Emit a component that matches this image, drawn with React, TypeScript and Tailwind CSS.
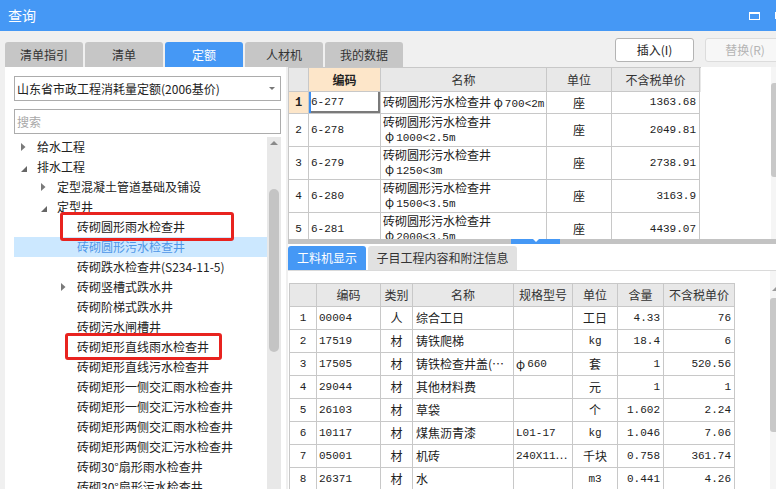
import React from 'react'

type TreeNode = { t: string; lv: number; arrow?: 'open' | 'closed'; sel?: boolean }

const tree: TreeNode[] = [
  { t: '给水工程', lv: 0, arrow: 'closed' },
  { t: '排水工程', lv: 0, arrow: 'open' },
  { t: '定型混凝土管道基础及铺设', lv: 1, arrow: 'closed' },
  { t: '定型井', lv: 1, arrow: 'open' },
  { t: '砖砌圆形雨水检查井', lv: 2 },
  { t: '砖砌圆形污水检查井', lv: 2, sel: true },
  { t: '砖砌跌水检查井(S234-11-5)', lv: 2 },
  { t: '砖砌竖槽式跌水井', lv: 2, arrow: 'closed' },
  { t: '砖砌阶梯式跌水井', lv: 2 },
  { t: '砖砌污水闸槽井', lv: 2 },
  { t: '砖砌矩形直线雨水检查井', lv: 2 },
  { t: '砖砌矩形直线污水检查井', lv: 2 },
  { t: '砖砌矩形一侧交汇雨水检查井', lv: 2 },
  { t: '砖砌矩形一侧交汇污水检查井', lv: 2 },
  { t: '砖砌矩形两侧交汇雨水检查井', lv: 2 },
  { t: '砖砌矩形两侧交汇污水检查井', lv: 2 },
  { t: '砖砌30°扇形雨水检查井', lv: 2 },
  { t: '砖砌30°扇形污水检查井', lv: 2 },
]

const pad = ['pl-[4px]', 'pl-[24px]', 'pl-[44px]']

const upper = [
  { n: '1', code: '6-277', l1: '砖砌圆形污水检查井 ', l2: '700<2m', price: '1363.68', h: 'h-[22px]' },
  { n: '2', code: '6-278', l1: '砖砌圆形污水检查井', l2: '1000<2.5m', price: '2049.81', h: 'h-[33px]' },
  { n: '3', code: '6-279', l1: '砖砌圆形污水检查井', l2: '1250<3m', price: '2738.91', h: 'h-[33px]' },
  { n: '4', code: '6-280', l1: '砖砌圆形污水检查井', l2: '1500<3.5m', price: '3163.9', h: 'h-[33px]' },
  { n: '5', code: '6-281', l1: '砖砌圆形污水检查井', l2: '2000<3.5m', price: '4439.07', h: 'h-[33px]' },
]

const lower = [
  ['1', '00004', '人', '综合工日', '', '工日', '4.33', '76'],
  ['2', '17519', '材', '铸铁爬梯', '', 'kg', '18.4', '6'],
  ['3', '17505', '材', '铸铁检查井盖(⋯', 'φ660', '套', '1', '520.56'],
  ['4', '29044', '材', '其他材料费', '', '元', '1', '1'],
  ['5', '26103', '材', '草袋', '', '个', '1.602', '2.24'],
  ['6', '10117', '材', '煤焦沥青漆', 'L01-17', 'kg', '1.046', '7.06'],
  ['7', '05001', '材', '机砖', '240X11⋯', '千块', '0.758', '361.74'],
  ['8', '26371', '材', '水', '', 'm3', '0.441', '4.26'],
]

const mono = "font-['Liberation_Mono','Noto_Sans_CJK_SC',monospace] text-[11px]"
const cell = 'border-r border-b border-[#c8c8c8] flex items-center shrink-0 overflow-hidden whitespace-nowrap'

function Phi() {
  return <span className="font-['Noto_Sans_CJK_SC',sans-serif] text-[12px] pr-[2px]">φ</span>
}

function Arrow({ kind }: { kind?: 'open' | 'closed' }) {
  if (kind === 'closed')
    return (
      <svg width="5" height="8" viewBox="0 0 5 8">
        <path d="M0 0 L4.5 4 L0 8 Z" fill="#7a7a7a" />
      </svg>
    )
  if (kind === 'open')
    return (
      <svg width="6" height="6" viewBox="0 0 6 6" className="mt-[4px]">
        <path d="M6 0 L6 6 L0 6 Z" fill="#666" />
      </svg>
    )
  return null
}

export default function App() {
  const lowerW = ['w-[27px]', 'w-[64px]', 'w-[32px]', 'w-[101px]', 'w-[59px]', 'w-[45px]', 'w-[46px]', 'w-[71px]']
  const lowerAlign = ['justify-center', 'pl-[2px]', 'justify-center', 'pl-[3px]', 'pl-[2px]', 'justify-center', 'justify-end pr-[3px]', 'justify-end pr-[3px]']
  const lowerHead = ['', '编码', '类别', '名称', '规格型号', '单位', '含量', '不含税单价']
  const isCjk = (s: string) => /[\u4e00-\u9fff]/.test(s)

  return (
    <div className="w-[776px] h-[489px] overflow-hidden bg-[#f0f0f0] flex flex-col font-['Noto_Sans_CJK_SC',sans-serif] text-[12px] text-[#333]">
      {/* title bar */}
      <div className="h-[31px] shrink-0 bg-[#4598f5] flex items-center pl-[8px] text-white text-[14px]">
        <span>查询</span>
        <div className="ml-auto w-[11px] h-[8px] border border-white border-t-2" />
        <div className="ml-[15px] w-px h-[7px] bg-white" />
      </div>

      {/* tabs + buttons */}
      <div className="h-[36px] shrink-0 flex">
        <div className="flex items-end gap-[2px] pl-[5px] shrink-0">
          {['清单指引', '清单', '定额', '人材机', '我的数据'].map((t) => (
            <div
              key={t}
              className={
                t === '定额'
                  ? 'w-[78px] h-[25px] rounded-t-[3px] bg-[#4598f5] text-white flex items-center justify-center'
                  : 'w-[78px] h-[25px] rounded-t-[3px] bg-[#c6c6c6] text-[#333] flex items-center justify-center'
              }
            >
              {t}
            </div>
          ))}
        </div>
        <div className="ml-[212px] flex gap-[11px] pt-[7px] shrink-0">
          <button className="w-[79px] h-[24px] shrink-0 border border-[#b4b4b4] rounded-[3px] bg-white text-[#222]">插入(I)</button>
          <button className="w-[80px] h-[24px] shrink-0 border border-[#dcdcdc] rounded-[3px] bg-[#f7f7f7] text-[#b4b4b4]">替换(R)</button>
        </div>
      </div>

      <div className="flex-1 min-h-0 flex">
        {/* left panel */}
        <div className="w-[281px] ml-[5px] shrink-0 bg-white flex flex-col pl-[9px] pr-[5px]">
          <div className="mt-[9px] h-[25px] border border-[#acacac] flex items-center pl-[2px] pr-[5px]">
            <span className="text-[#222]">山东省市政工程消耗量定额(2006基价)</span>
            <svg width="6" height="3" viewBox="0 0 6 3" className="ml-auto">
              <path d="M0 0 L6 0 L3 3 Z" fill="#777" />
            </svg>
          </div>
          <div className="mt-[8px] h-[25px] border border-[#acacac] flex items-center pl-[2px] text-[#a8a8a8]">搜索</div>
          <div className="mt-[3px] flex-1 min-h-0 flex">
            <div className="relative flex-1 min-w-0">
              {tree.map((n) => (
                <div
                  key={n.t}
                  className={`h-[20px] flex items-center ${pad[n.lv]} ${n.sel ? 'bg-[#cce8ff] text-[#4f97e8]' : 'text-[#222]'}`}
                >
                  <div className="w-[19px] pl-[3px] flex items-center shrink-0">
                    <Arrow kind={n.arrow} />
                  </div>
                  <span className="whitespace-nowrap">{n.t}</span>
                </div>
              ))}
              <div className="absolute left-[46px] top-[75px] w-[174px] h-[29px] border-[3px] border-[#e8231f] rounded-[3px]" />
              <div className="absolute left-[51px] top-[196px] w-[157px] h-[27px] border-[3px] border-[#e8231f] rounded-[3px]" />
            </div>
            <div className="w-[14px] shrink-0 bg-[#e8e8e8] flex flex-col items-center">
              <svg width="8" height="4" viewBox="0 0 8 4" className="mt-[4px]">
                <path d="M0 4 L4 0 L8 4 Z" fill="#8a8a8a" />
              </svg>
              <div className="mt-[44px] w-[10px] h-[163px] rounded-full bg-[#c4c4c4]" />
            </div>
          </div>
        </div>

        {/* right panel */}
        <div className="ml-[2px] flex-1 min-w-0 bg-white flex flex-col">
          {/* upper table */}
          <div className="h-[172px] shrink-0 flex">
            <div className="flex-1 min-w-0 overflow-hidden">
              <div className="w-[413px] border-l border-t border-[#c8c8c8]">
                <div className="flex h-[24px] bg-[#e8e8e8]">
                  <div className={`${cell} w-[20px]`} />
                  <div className={`${cell} w-[72px] justify-center bg-[#fde6c9] font-bold text-[#222]`}>编码</div>
                  <div className={`${cell} w-[166px] justify-center`}>名称</div>
                  <div className={`${cell} w-[65px] justify-center`}>单位</div>
                  <div className={`${cell} w-[88px] justify-center`}>不含税单价</div>
                </div>
                {upper.map((r, i) => (
                  <div key={r.n} className={`flex ${r.h} text-[#222]`}>
                    <div className={`${cell} w-[20px] justify-center ${mono} ${i === 0 ? 'bg-[#fde6c9] font-bold text-[12px]' : ''}`}>{r.n}</div>
                    <div
                      className={`${cell} w-[72px] pl-[2px] ${mono} ${i === 0 ? 'shadow-[inset_2px_0_0_#3d8ef0,inset_-2px_-2px_0_#7a7a7a]' : ''}`}
                    >
                      {r.code}
                    </div>
                    <div className={`${cell} w-[166px] pl-[2px]`}>
                      {i === 0 ? (
                        <span>
                          {r.l1}
                          <Phi />
                          <span className={mono}>{r.l2}</span>
                        </span>
                      ) : (
                        <div className="leading-[14px]">
                          <div>{r.l1}</div>
                          <div className="pl-[2px]">
                            <Phi />
                            <span className={mono}>{r.l2}</span>
                          </div>
                        </div>
                      )}
                    </div>
                    <div className={`${cell} w-[65px] justify-center`}>座</div>
                    <div className={`${cell} w-[88px] justify-end pr-[3px] ${mono}`}>{r.price}</div>
                  </div>
                ))}
              </div>
            </div>
            <div className="w-[5px] shrink-0 bg-[#f5f5f5] flex flex-col">
              <div className="mt-[16px] h-[94px] rounded-l-[3px] bg-[#c8c8c8]" />
            </div>
          </div>

          {/* splitter */}
          <div className="h-[5px] shrink-0 bg-[#c3c3c3] flex">
            <div className="ml-[223px] w-[49px] bg-[#4598f5] flex justify-center">
              <svg width="6" height="3" viewBox="0 0 6 3">
                <path d="M0 0 L6 0 L3 3 Z" fill="#fff" />
              </svg>
            </div>
          </div>

          {/* lower tabs */}
          <div className="h-[27px] shrink-0 flex items-end gap-[2px] bg-white border-b border-[#dadada]">
            <div className="w-[78px] h-[24px] rounded-t-[3px] bg-[#4598f5] text-white flex items-center justify-center">工料机显示</div>
            <div className="w-[149px] h-[24px] rounded-t-[3px] bg-[#e1e1e1] text-[#333] flex items-center justify-center">子目工程内容和附注信息</div>
          </div>

          {/* lower table */}
          <div className="flex-1 min-h-0 flex">
            <div className="flex-1 min-w-0 pt-[12px] pl-px overflow-hidden">
              <div className="w-[446px] border-l border-t border-[#c8c8c8]">
                <div className="flex h-[23px] bg-[#e8e8e8]">
                  {lowerHead.map((h, i) => (
                    <div key={i} className={`${cell} ${lowerW[i]} justify-center`}>{h}</div>
                  ))}
                </div>
                {lower.map((r) => (
                  <div key={r[0]} className="flex h-[23px] text-[#222]">
                    {r.map((v, i) => (
                      <div key={i} className={`${cell} ${lowerW[i]} ${lowerAlign[i]} ${isCjk(v) ? 'text-[12px]' : mono}`}>
                        {v.startsWith('φ') ? (
                          <>
                            <Phi />
                            {v.slice(1)}
                          </>
                        ) : (
                          v
                        )}
                      </div>
                    ))}
                  </div>
                ))}
              </div>
            </div>
            <div className="w-[6px] shrink-0 bg-[#f5f5f5] flex flex-col">
              <svg width="6" height="4" viewBox="0 0 6 4" className="mt-[16px] ml-[2px]">
                <path d="M0 4 L4 0 L8 4 Z" fill="#9a9a9a" />
              </svg>
              <div className="mt-[7px] h-[134px] rounded-l-[3px] bg-[#c8c8c8]" />
            </div>
          </div>
        </div>
      </div>
    </div>
  )
}
